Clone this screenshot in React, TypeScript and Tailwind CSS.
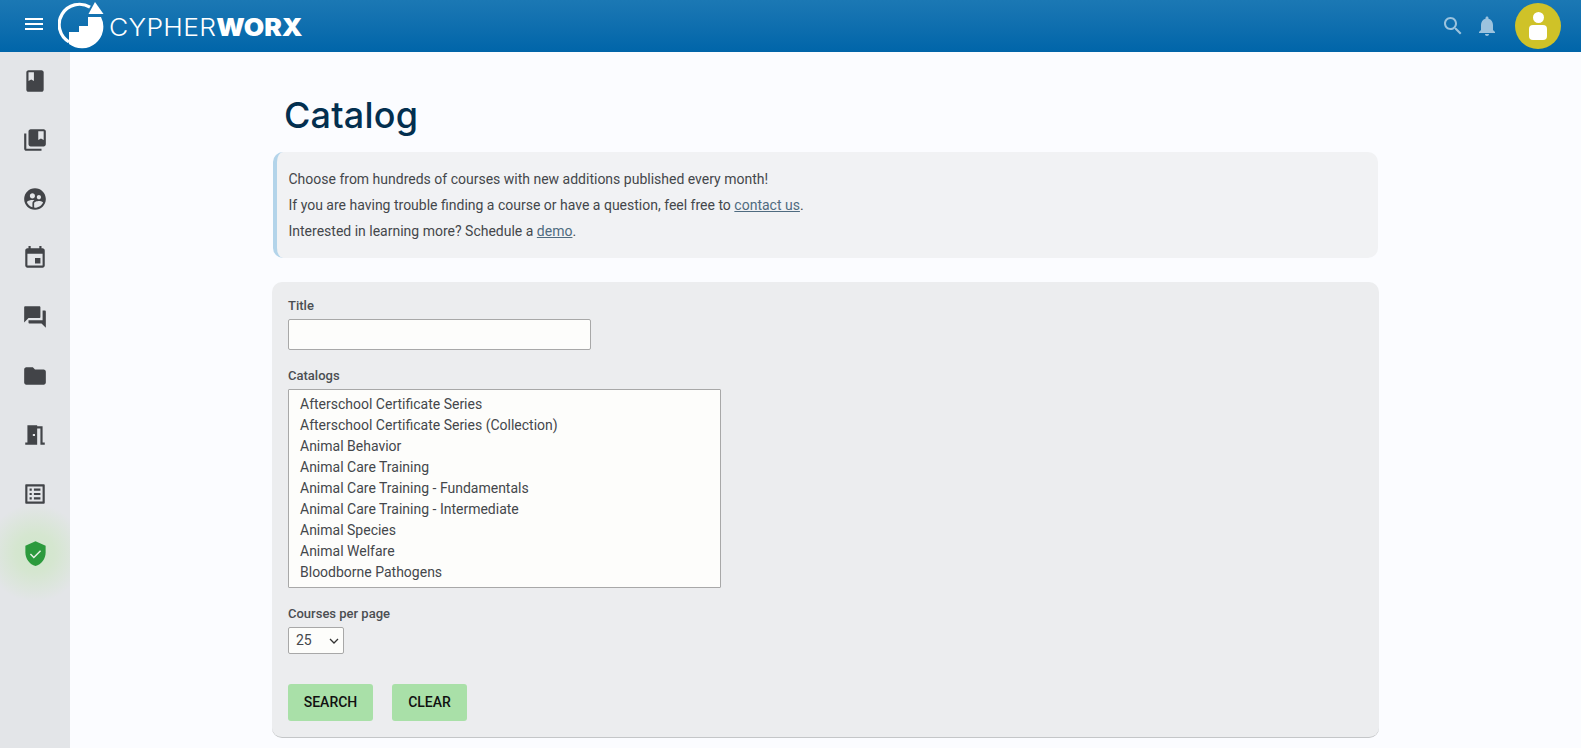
const ICONS = [
  'M18 2H6c-1.1 0-2 .9-2 2v16c0 1.1.9 2 2 2h12c1.1 0 2-.9 2-2V4c0-1.1-.9-2-2-2zM6 4h5v8l-2.5-1.5L6 12V4z',
  'M4 6H2v14c0 1.1.9 2 2 2h14v-2H4V6zm16-4H8c-1.1 0-2 .9-2 2v12c0 1.1.9 2 2 2h12c1.1 0 2-.9 2-2V4c0-1.1-.9-2-2-2zm0 10l-2.5-1.5L15 12V4h5v8z',
  'M12 2C6.47 2 2 6.47 2 12s4.47 10 10 10 10-4.47 10-10S17.53 2 12 2zm3.61 6.34c1.07 0 1.93.86 1.93 1.93 0 1.07-.86 1.93-1.93 1.93-1.07 0-1.93-.86-1.93-1.93-.01-1.07.86-1.93 1.93-1.93zm-6-1.58c1.3 0 2.36 1.06 2.36 2.36 0 1.3-1.06 2.36-2.36 2.36s-2.36-1.06-2.36-2.36c0-1.31 1.05-2.36 2.36-2.36zm0 9.13v3.75c-2.4-.75-4.3-2.6-5.14-4.96 1.05-1.12 3.67-1.69 5.14-1.69.53 0 1.2.08 1.9.22-1.64.87-1.9 2.02-1.9 2.68zM11.99 20c-.27 0-.53-.01-.79-.04v-4.07c0-1.42 2.94-2.13 4.4-2.13 1.07 0 2.92.39 3.84 1.15-1.17 2.97-4.06 5.09-7.45 5.09z',
  'M17 12h-5v5h5v-5zM16 1v2H8V1H6v2H5c-1.11 0-1.99.9-1.99 2L3 19c0 1.1.89 2 2 2h14c1.1 0 2-.9 2-2V5c0-1.1-.9-2-2-2h-1V1h-2zm3 18H5V8h14v11z',
  'M21 6h-2v9H6v2c0 .55.45 1 1 1h11l4 4V7c0-.55-.45-1-1-1zm-4 6V3c0-.55-.45-1-1-1H3c-.55 0-1 .45-1 1v14l4-4h10c.55 0 1-.45 1-1z',
  'M10 4H4c-1.1 0-1.99.9-1.99 2L2 18c0 1.1.9 2 2 2h16c1.1 0 2-.9 2-2V8c0-1.1-.9-2-2-2h-8l-2-2z',
  'M14 6v15H3v-2h2V3h9v1h5v15h2v2h-4V6h-3zm-4 5v2h2v-2h-2z',
  'M19 5v14H5V5h14m1.1-2H3.9c-.5 0-.9.4-.9.9v16.2c0 .4.4.9.9.9h16.2c.4 0 .9-.5.9-.9V3.9c0-.5-.5-.9-.9-.9zM11 7h6v2h-6V7zm0 4h6v2h-6v-2zm0 4h6v2h-6zM7 7h2v2H7zm0 4h2v2H7zm0 4h2v2H7z',
]

const CATALOGS = [
  'Afterschool Certificate Series',
  'Afterschool Certificate Series (Collection)',
  'Animal Behavior',
  'Animal Care Training',
  'Animal Care Training - Fundamentals',
  'Animal Care Training - Intermediate',
  'Animal Species',
  'Animal Welfare',
  'Bloodborne Pathogens',
]

function Icon({ d, className }: { d: string; className?: string }) {
  return (
    <svg viewBox="0 0 24 24" className={className} fill="currentColor">
      <path d={d} />
    </svg>
  )
}

function Logo() {
  return (
    <div className="flex items-center">
      <svg viewBox="0 0 50 50" className="w-[50px] h-[50px] shrink-0">
        <path d="M32 6.2A20 20 0 1 0 11 41" fill="none" stroke="#fff" strokeWidth="3.2" />
        <path d="M11 31H21V25H30V16H43A21.5 21.5 0 0 1 11 43z" fill="#fff" />
        <path d="M37 1l-6.5 12h15z" fill="#fff" />
      </svg>
      <span className="ml-[1px] mt-[3px] inline-block origin-left scale-x-[1.1] text-[24px] leading-none text-white font-['Inter',sans-serif] font-light tracking-[0.3px] whitespace-nowrap">
        CYPHER<span className="font-black tracking-[0px]">WORX</span>
      </span>
    </div>
  )
}

export default function App() {
  return (
    <div className="h-[748px] overflow-hidden flex flex-col bg-[#fbfcff] font-['Roboto',sans-serif] text-[14px] text-[#44474b]">
      <header className="h-[52px] shrink-0 flex items-center pl-[22px] pr-[20px] text-white bg-gradient-to-b from-[#1b78b4] to-[#0065a9]">
        <Icon d="M3 18h18v-2H3v2zm0-5h18v-2H3v2zm0-7v2h18V6H3z" className="w-6 h-6 -mt-[4px] shrink-0" />
        <div className="ml-[12px]">
          <Logo />
        </div>
        <div className="ml-auto flex items-center text-[#9cc3de]">
          <Icon d="M15.5 14h-.79l-.28-.27C15.41 12.59 16 11.11 16 9.5 16 5.91 13.09 3 9.5 3S3 5.91 3 9.5 5.91 16 9.5 16c1.61 0 3.09-.59 4.23-1.57l.27.28v.79l5 4.99L20.49 19l-4.99-5zm-6 0C7.01 14 5 11.99 5 9.5S7.01 5 9.5 5 14 7.01 14 9.5 11.99 14 9.5 14z" className="w-6 h-6" />
          <Icon d="M12 22c1.1 0 2-.9 2-2h-4c0 1.1.89 2 2 2zm6-6v-5c0-3.07-1.64-5.64-4.5-6.32V4c0-.83-.67-1.5-1.5-1.5s-1.5.67-1.5 1.5v.68C7.63 5.36 6 7.92 6 11v5l-2 2v1h16v-1l-2-2z" className="w-6 h-6 ml-[10px]" />
          <div className="ml-[16px] w-[46px] h-[46px] rounded-full bg-[#cfc228] flex flex-col items-center justify-center">
            <span className="w-[11px] h-[11px] rounded-full bg-white" />
            <span className="mt-[2px] w-[18px] h-[15px] rounded-[4px] bg-white" />
          </div>
        </div>
      </header>

      <div className="flex flex-1 min-h-0">
        <nav className="w-[70px] shrink-0 overflow-hidden bg-[#e3e5e8] flex flex-col items-center pt-[16px] gap-[33px] text-[#424448]">
          {ICONS.map((d) => (
            <Icon key={d} d={d} className="relative z-10 w-[26px] h-[26px] shrink-0" />
          ))}
          <div className="relative w-[26px] h-[26px] shrink-0 flex items-center justify-center text-[#2c9a3d]">
            <div className="absolute -inset-[36px] bg-[radial-gradient(circle_closest-side,#d0e6cb_0%,#d5e6d0_40%,#e3e5e8_100%)]" />
            <svg viewBox="0 0 24 24" className="relative w-[27px] h-[27px] shrink-0">
              <path d="M12 1L3 5v6c0 5.55 3.84 10.74 9 12 5.16-1.26 9-6.45 9-12V5l-9-4z" fill="currentColor" />
              <path d="M7.5 12.5l3 3 6-6" fill="none" stroke="#e8f3e6" strokeWidth="1.3" />
            </svg>
          </div>
        </nav>

        <main className="flex-1 min-w-0 pl-[202px] pr-[202px]">
          <h1 className="mt-[38px] ml-[12px] text-[36px] leading-[50px] tracking-[0.2px] font-medium text-[#032f4f] font-['Inter',sans-serif]">Catalog</h1>
          <div className="mt-[12px] ml-[1px] mr-[1px] h-[106px] rounded-[10px] border-l-[4px] border-[#b3d4ea] bg-[#f1f2f4] pl-[11.5px] pt-[14px] leading-[26px]">
            <p>Choose from hundreds of courses with new additions published every month!</p>
            <p>
              If you are having trouble finding a course or have a question, feel free to{' '}
              <a className="underline text-[#4f6b80]">contact us</a>.
            </p>
            <p>
              Interested in learning more? Schedule a <a className="underline text-[#4f6b80]">demo</a>.
            </p>
          </div>

          <form className="mt-[24px] h-[456px] rounded-[10px] bg-[#ecedef] border-b border-[#c4c6c8] pl-[16px] pt-[16px]">
            <label className="block text-[13px] leading-[16px] font-medium text-[#4b4e52]">Title</label>
            <input className="block mt-[5px] w-[303px] h-[31px] rounded-[2px] border border-[#a8a8a8] bg-[#fdfdfb]" />

            <label className="block mt-[18px] text-[13px] leading-[16px] font-medium text-[#4b4e52]">Catalogs</label>
            <select multiple size={9} className="block mt-[5px] w-[433px] h-[199px] pt-[6px] rounded-[1px] border border-[#a8a8a8] bg-[#fdfdfb] overflow-hidden outline-none">
              {CATALOGS.map((c) => (
                <option key={c} className="h-[21px] leading-[21px] pl-[11px] py-0">{c}</option>
              ))}
            </select>

            <label className="block mt-[18px] text-[13px] leading-[16px] font-medium text-[#4b4e52]">Courses per page</label>
            <div className="relative mt-[5px] w-[56px]">
              <select defaultValue="25" className="block w-[56px] h-[27px] pl-[7px] rounded-[2px] border border-[#a8a8a8] bg-[#fdfdfb] appearance-none">
                <option>10</option>
                <option>25</option>
                <option>50</option>
              </select>
              <svg viewBox="0 0 10 6" className="absolute right-[5px] top-[11px] w-[10px] h-[6px] pointer-events-none" fill="none" stroke="#333" strokeWidth="1.3">
                <path d="M1 1l4 4 4-4" />
              </svg>
            </div>

            <div className="mt-[30px] flex gap-[19px]">
              <button type="button" className="h-[37px] w-[85px] rounded-[3px] bg-[#a9e0a8] text-[14px] font-medium text-[#111]">SEARCH</button>
              <button type="button" className="h-[37px] w-[75px] rounded-[3px] bg-[#a9e0a8] text-[14px] font-medium text-[#111]">CLEAR</button>
            </div>
          </form>
        </main>
      </div>
    </div>
  )
}
